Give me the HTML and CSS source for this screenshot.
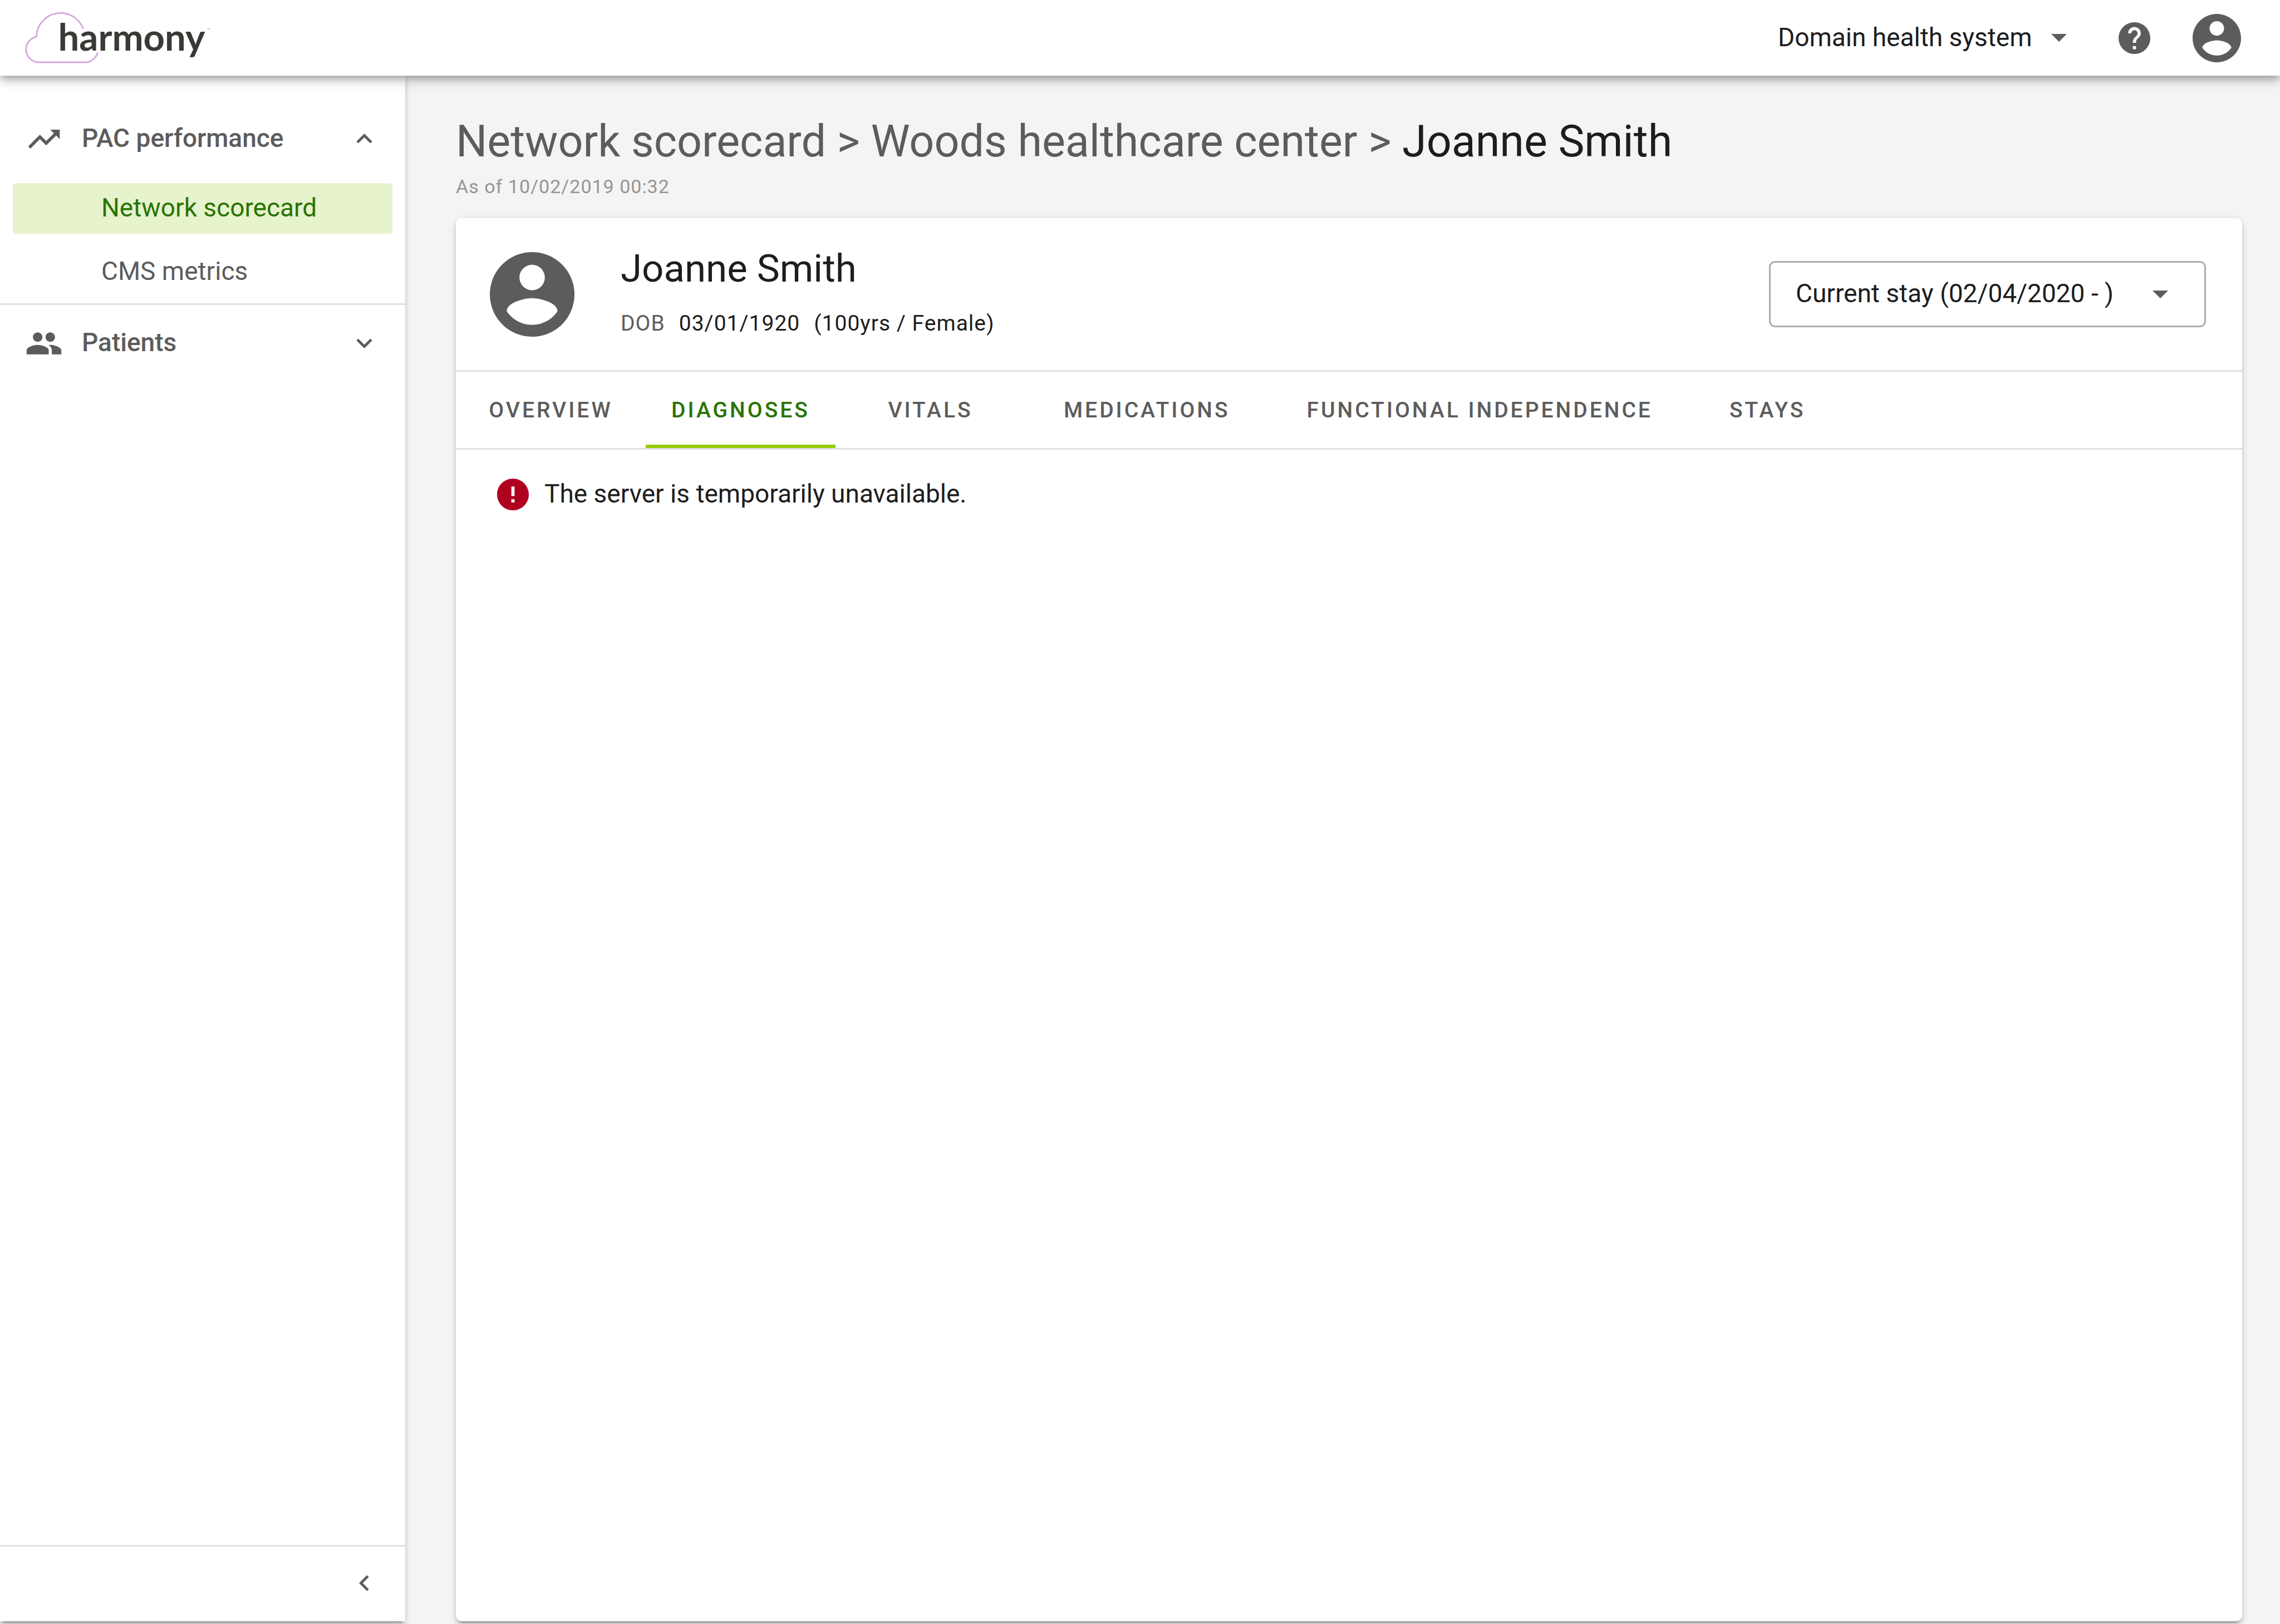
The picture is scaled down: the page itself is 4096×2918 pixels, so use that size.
FILE: index.html
```html
<!DOCTYPE html>
<html lang="en">
<head>
<meta charset="utf-8">
<meta name="viewport" content="width=device-width, initial-scale=1">
<title>Harmony - Joanne Smith</title>
<link rel="stylesheet" href="styles.css">
</head>
<body>
<div class="app">
  <header class="topbar">
    <a class="logo" href="#" aria-label="harmony">
      <svg class="logo-art" viewBox="0 0 420 144" aria-hidden="true">
        <path class="logo-cloud" d="M157.5 54.5A46 46 0 0 0 68.500 70A24.500 24.500 0 0 0 74 118.500H161A24.500 24.500 0 0 0 185 99.500"/>
        <text class="logo-word" x="110" y="96">harmony</text>
        <text class="logo-mark" x="393" y="59">™</text>
      </svg>
    </a>
    <div class="topbar-tools">
      <div class="picker">
        <select class="picker-select" aria-label="Organization"><option>Domain health system</option></select>
        <svg class="caret" viewBox="7 10 10 5" aria-hidden="true"><path d="M7 10l5 5 5-5z"/></svg>
      </div>
      <button class="icon-button help" type="button" aria-label="Help">
        <svg class="icon-md" viewBox="2 2 20 20" aria-hidden="true"><path d="M12 2C6.480 2 2 6.480 2 12s4.480 10 10 10 10-4.480 10-10S17.520 2 12 2zm1 17h-2v-2h2v2zm2.070-7.750l-.9.920C13.450 12.900 13 13.500 13 15h-2v-.5c0-1.100.45-2.100 1.170-2.830l1.240-1.260c.37-.36.59-.86.59-1.410 0-1.100-.9-2-2-2s-2 .9-2 2H8c0-2.210 1.790-4 4-4s4 1.790 4 4c0 .88-.36 1.680-.93 2.250z"/></svg>
      </button>
      <button class="icon-button" type="button" aria-label="Account">
        <svg class="icon-lg" viewBox="2 2 20 20" aria-hidden="true"><path d="M12 2C6.480 2 2 6.480 2 12s4.480 10 10 10 10-4.480 10-10S17.520 2 12 2zm0 3c1.660 0 3 1.340 3 3s-1.340 3-3 3-3-1.340-3-3 1.340-3 3-3zm0 14.200c-2.500 0-4.710-1.280-6-3.220.03-1.990 4-3.080 6-3.080 1.990 0 5.970 1.090 6 3.080-1.290 1.940-3.500 3.220-6 3.220z"/></svg>
      </button>
    </div>
  </header>

  <div class="body">
    <nav class="sidebar" aria-label="Main">
      <section class="group">
        <button class="group-head" type="button" aria-expanded="true">
          <svg class="group-icon" viewBox="0 0 24 24" aria-hidden="true"><path d="M16 6l2.290 2.290-4.880 4.880-4-4L2 16.590 3.410 18l6-6 4 4 6.300-6.290L22 12V6z"/></svg>
          <span class="group-name">PAC performance</span>
          <svg class="chevron" viewBox="0 0 24 24" aria-hidden="true"><path d="M12 8l-6 6 1.410 1.410L12 10.830l4.590 4.580L18 14z"/></svg>
        </button>
        <ul class="links">
          <li><a class="link link-active" href="#" aria-current="page">Network scorecard</a></li>
          <li><a class="link" href="#">CMS metrics</a></li>
        </ul>
      </section>
      <section class="group">
        <button class="group-head" type="button" aria-expanded="false">
          <svg class="group-icon" viewBox="0 0 24 24" aria-hidden="true"><path d="M16 11c1.660 0 2.990-1.340 2.990-3S17.660 5 16 5c-1.660 0-3 1.340-3 3s1.340 3 3 3zm-8 0c1.660 0 2.990-1.340 2.990-3S9.660 5 8 5C6.340 5 5 6.340 5 8s1.340 3 3 3zm0 2c-2.330 0-7 1.170-7 3.500V19h14v-2.500c0-2.330-4.670-3.500-7-3.500zm8 0c-.29 0-.62.020-.97.050 1.160.84 1.970 1.970 1.970 3.450V19h6v-2.500c0-2.330-4.670-3.500-7-3.500z"/></svg>
          <span class="group-name">Patients</span>
          <svg class="chevron" viewBox="0 0 24 24" aria-hidden="true"><path d="M16.590 8.590L12 13.170 7.410 8.590 6 10l6 6 6-6z"/></svg>
        </button>
      </section>
      <div class="sidebar-foot">
        <button class="icon-button" type="button" aria-label="Collapse menu">
          <svg class="chevron" viewBox="0 0 24 24" aria-hidden="true"><path d="M15.410 7.410L14 6l-6 6 6 6 1.410-1.410L10.830 12z"/></svg>
        </button>
      </div>
    </nav>

    <main class="content">
      <h1 class="crumbs"><a href="#">Network scorecard</a> &gt; <a href="#">Woods healthcare center</a> &gt; <span class="crumb-current">Joanne Smith</span></h1>
      <p class="as-of">As of 10/02/2019 00:32</p>

      <article class="card">
        <div class="patient">
          <svg class="avatar" viewBox="2 2 20 20" aria-hidden="true"><path d="M12 2C6.480 2 2 6.480 2 12s4.480 10 10 10 10-4.480 10-10S17.520 2 12 2zm0 3c1.660 0 3 1.340 3 3s-1.340 3-3 3-3-1.340-3-3 1.340-3 3-3zm0 14.200c-2.500 0-4.710-1.280-6-3.220.03-1.990 4-3.080 6-3.080 1.990 0 5.970 1.090 6 3.080-1.290 1.940-3.500 3.220-6 3.220z"/></svg>
          <div class="patient-text">
            <h2 class="patient-name">Joanne Smith</h2>
            <p class="patient-facts"><span class="fact-label">DOB</span><span>03/01/1920</span><span>(100yrs / Female)</span></p>
          </div>
          <div class="stay">
            <select class="stay-select" aria-label="Stay"><option>Current stay (02/04/2020 - )</option></select>
            <svg class="caret stay-caret" viewBox="7 10 10 5" aria-hidden="true"><path d="M7 10l5 5 5-5z"/></svg>
          </div>
        </div>
        <div class="tabs" role="tablist">
          <button class="tab tab-even" type="button" role="tab">OVERVIEW</button>
          <button class="tab tab-even tab-active" type="button" role="tab" aria-selected="true">DIAGNOSES</button>
          <button class="tab tab-even" type="button" role="tab">VITALS</button>
          <button class="tab" type="button" role="tab">MEDICATIONS</button>
          <button class="tab" type="button" role="tab">FUNCTIONAL INDEPENDENCE</button>
          <button class="tab" type="button" role="tab">STAYS</button>
        </div>
        <div class="alert" role="alert">
          <svg class="icon-md alert-icon" viewBox="2 2 20 20" aria-hidden="true"><path d="M12 2C6.480 2 2 6.480 2 12s4.480 10 10 10 10-4.480 10-10S17.520 2 12 2zm1 15h-2v-2h2v2zm0-4h-2V7h2v6z"/></svg>
          <span class="alert-text">The server is temporarily unavailable.</span>
        </div>
      </article>
    </main>
  </div>
</div>
</body>
</html>
```
FILE: styles.css
```css
* {
  box-sizing: border-box;
}

body {
  margin: 0;
  background: #f4f4f4;
  color: #1d1d1d;
  font: 46px/68px Roboto, "Liberation Sans", sans-serif;
}

h1, h2, p, ul {
  margin: 0;
  padding: 0;
  font-weight: 400;
}

ul {
  list-style: none;
}

a {
  color: inherit;
  text-decoration: none;
}

button, select {
  margin: 0;
  padding: 0;
  border: 0;
  background: none;
  color: inherit;
  font: inherit;
  letter-spacing: inherit;
  appearance: none;
}

svg {
  display: block;
  flex: none;
  fill: #5c5c5c;
}

.app {
  display: flex;
  flex-direction: column;
  min-height: 100vh;
  padding-bottom: 5px;
  overflow: hidden;
}

/* Top bar */

.topbar {
  position: relative;
  z-index: 2;
  display: flex;
  align-items: center;
  justify-content: space-between;
  height: 136px;
  padding-right: 70px;
  background: #fff;
  box-shadow: 0 6px 11px -3px rgba(0, 0, 0, 0.2), 0 11px 14px rgba(0, 0, 0, 0.14), 0 3px 28px rgba(0, 0, 0, 0.12);
}

.logo-art {
  width: 398px;
  height: 136px;
}

.logo-cloud {
  fill: none;
  stroke: #d6a6e0;
  stroke-width: 3;
}

.logo-word {
  fill: #393a35;
  font: 700 71px Lato, sans-serif;
}

.logo-mark {
  fill: #8a8a8a;
  font: 8px Lato, sans-serif;
}

.topbar-tools {
  display: flex;
  align-items: center;
}

.picker, .stay {
  display: grid;
  align-items: center;
}

.picker > *, .stay > * {
  grid-area: 1 / 1;
}

.picker-select {
  padding: 0 62px 3px 0;
}

.caret {
  width: 28px;
  height: 14px;
  justify-self: end;
  pointer-events: none;
}

.help {
  margin: 0 76px 0 93px;
}

.icon-md {
  width: 57px;
  height: 57px;
}

.icon-lg {
  width: 87px;
  height: 87px;
}

/* Layout under the top bar */

.body {
  display: flex;
  flex: 1;
}

/* Sidebar */

.sidebar {
  display: flex;
  flex-direction: column;
  flex: none;
  width: 728px;
  padding-top: 45px;
  background: #fff;
  color: #5c5c5c;
  box-shadow: 0 9px 3px -6px rgba(0, 0, 0, 0.2), 0 6px 6px rgba(0, 0, 0, 0.14), 0 3px 14px rgba(0, 0, 0, 0.12);
}

.group + .group {
  border-top: 3px solid #e0e0e0;
}

.group-head {
  display: flex;
  align-items: center;
  width: 100%;
  height: 137px;
  padding: 0 45px;
  font-weight: 500;
  text-align: left;
}

.group-icon {
  width: 68px;
  height: 68px;
}

.group-name {
  flex: 1;
  padding: 0 0 3px 34px;
}

.chevron {
  width: 57px;
  height: 57px;
}

.links {
  display: grid;
  gap: 23px;
  padding: 11px 23px;
}

.link {
  display: block;
  padding: 0 0 3px 159px;
  border-radius: 6px;
  line-height: 88px;
}

.link-active {
  background: #e6f3cc;
  color: #297400;
}

.sidebar-foot {
  display: flex;
  align-items: center;
  justify-content: flex-end;
  height: 137px;
  margin-top: auto;
  padding: 0 45px 3px 0;
  border-top: 3px solid #e0e0e0;
}

/* Content */

.content {
  display: flex;
  flex: 1;
  flex-direction: column;
  padding: 64px 68px 0 91px;
}

.crumbs {
  color: #5c5c5c;
  font-size: 79px;
  line-height: 108px;
}

.crumb-current {
  color: #1d1d1d;
}

.as-of {
  margin-bottom: 30px;
  color: #949494;
  font-size: 34px;
  line-height: 54px;
  letter-spacing: 1px;
}

.card {
  flex: 1;
  border-radius: 11px;
  background: #fff;
  box-shadow: 0 9px 3px -6px rgba(0, 0, 0, 0.2), 0 6px 6px rgba(0, 0, 0, 0.14), 0 3px 14px rgba(0, 0, 0, 0.12);
}

.patient {
  display: flex;
  align-items: center;
  height: 276px;
  padding: 0 65px 0 61px;
  border-bottom: 3px solid #e0e0e0;
}

.avatar {
  width: 152px;
  height: 152px;
}

.patient-text {
  flex: 1;
  padding: 6px 0 0 83px;
}

.patient-name {
  font-size: 69px;
  line-height: 98px;
}

.patient-facts {
  display: flex;
  gap: 25px;
  font-size: 39px;
  line-height: 98px;
  letter-spacing: 1px;
}

.fact-label {
  color: #5c5c5c;
}

.stay-select {
  width: 785px;
  height: 119px;
  padding: 0 45px 3px;
  border: 3px solid #adadad;
  border-radius: 11px;
}

.stay-caret {
  margin-right: 68px;
}

.tabs {
  display: flex;
  height: 140px;
  border-bottom: 3px solid #e0e0e0;
  color: #5c5c5c;
  font-size: 39px;
  font-weight: 500;
  letter-spacing: 4px;
}

.tab {
  padding: 0 69px;
  text-align: center;
}

.tab-even {
  width: 341px;
  padding: 0;
}

.tab-active {
  color: #297400;
  box-shadow: inset 0 -6px #96cc00;
}

.alert {
  display: flex;
  align-items: center;
  gap: 28px;
  padding: 45px 74px;
}

.alert-icon {
  fill: #b00020;
}

.alert-text {
  padding-bottom: 3px;
}
```
